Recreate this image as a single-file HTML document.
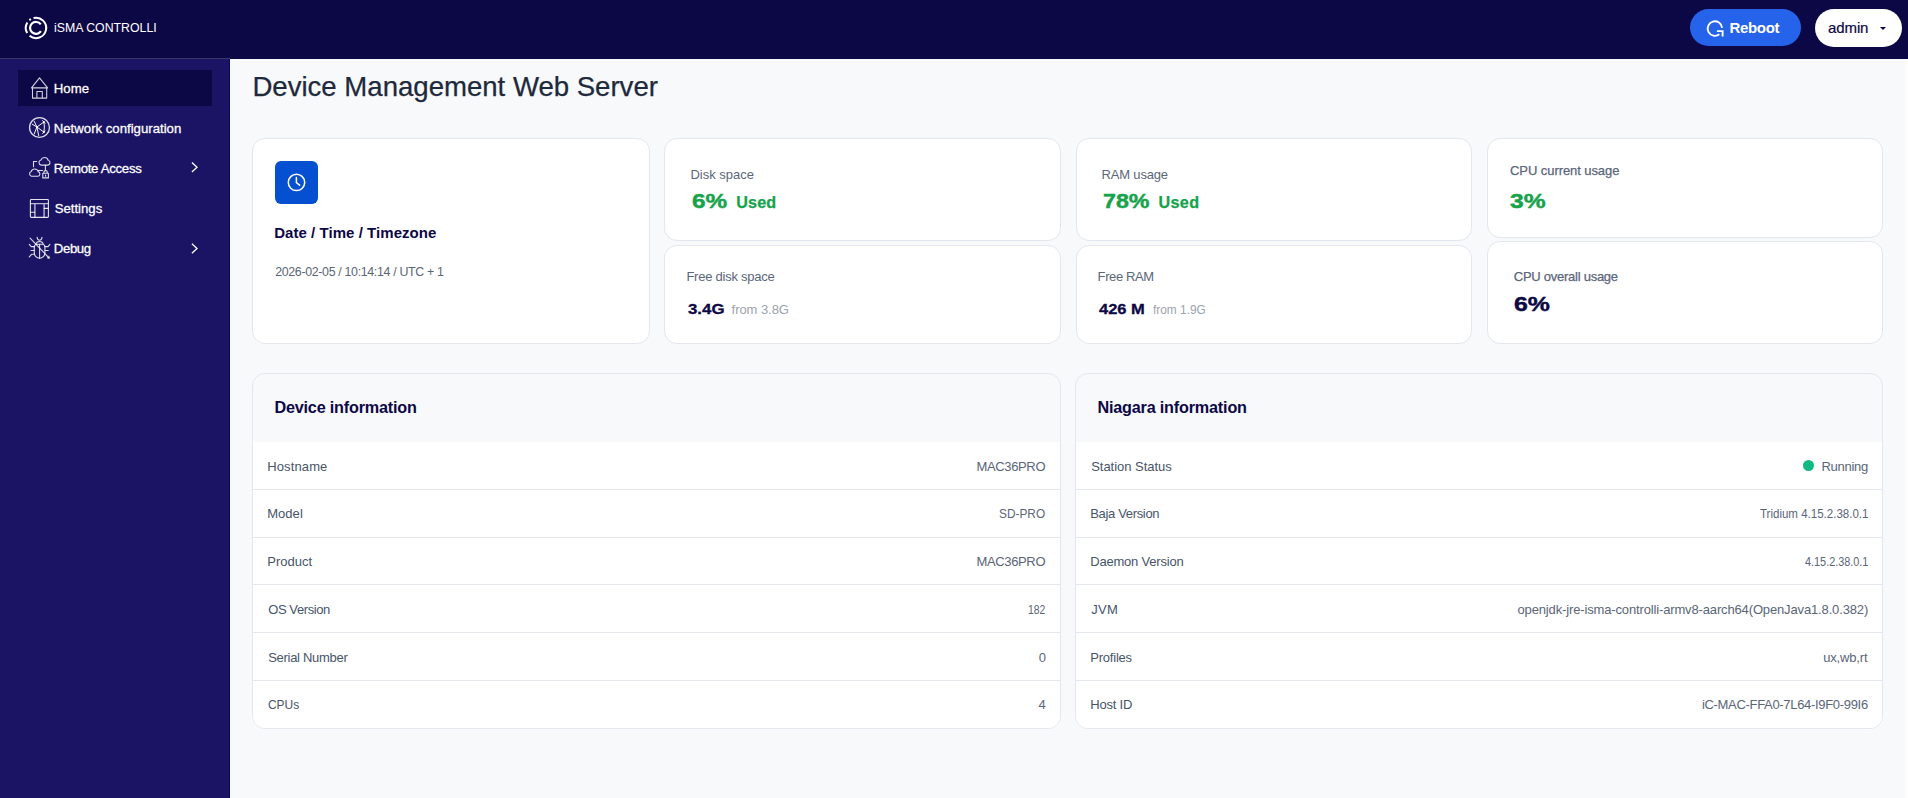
<!DOCTYPE html>
<html lang="en">
<head>
<meta charset="utf-8">
<title>Device Management Web Server</title>
<style>
*{box-sizing:border-box;margin:0;padding:0}
html,body{width:1908px;height:798px;overflow:hidden;background:#f8f9fb;font-family:"Liberation Sans",sans-serif}
.abs,.t,.card,.panel{position:absolute}
.t{white-space:nowrap;transform-origin:0 50%;display:block}
.hdr{left:0;top:0;width:1908px;height:59px;background:#0c0745}
.hline{left:0;top:58px;width:230px;height:1px;background:#3b3768}
.side{left:0;top:59px;width:230px;height:739px;background:#1b1464;border-right:1px solid #0e0858}
.active{left:18px;top:70px;width:194px;height:36px;background:#0c0745}
.card{background:#fff;border:1px solid #e5e7ee;border-radius:13px}
.panel{background:#f8f9fb;border:1px solid #e5e7ee;border-radius:13px;overflow:hidden}
.panel .body{position:absolute;left:0;right:0;top:68px;bottom:0;background:#fff}
.panel .ln{position:absolute;left:0;right:0;height:1px;background:#e5e7ee}
.btn{border-radius:19px}
svg{position:absolute;overflow:visible}
</style>
</head>
<body>
<!-- backgrounds -->
<div class="abs hdr"></div>
<div class="abs side"></div>
<div class="abs hline"></div>
<div class="abs" style="left:1905px;top:59px;width:3px;height:739px;background:#fcfcfd"></div>

<header>
<div class="abs btn" style="left:1690px;top:9px;width:111px;height:37px;background:#2563eb"></div>
<div class="abs btn" style="left:1815px;top:9px;width:87px;height:38px;background:#fff"></div>
<div class="abs" style="left:1879.5px;top:26.5px;width:0;height:0;border-left:3.6px solid transparent;border-right:3.6px solid transparent;border-top:3.8px solid #0c0745"></div>
<span class="t" style="top:19.00px;font-size:13.2px;line-height:17px;color:#ffffff;left:53.70px;transform:scaleX(0.9347);">iSMA CONTROLLI</span>
<span class="t" style="top:18.00px;font-size:15px;line-height:20px;color:#ffffff;font-weight:700;left:1729.40px;letter-spacing:-0.313px;">Reboot</span>
<span class="t" style="top:18.00px;font-size:15px;line-height:20px;color:#0c0745;-webkit-text-stroke:0.2px #0c0745;left:1828.12px;letter-spacing:-0.138px;">admin</span>
</header>

<nav>
<div class="abs active"></div>
<span class="t" style="top:80.00px;font-size:13.2px;line-height:17px;color:#ffffff;-webkit-text-stroke:0.28px #ffffff;left:53.77px;letter-spacing:0.074px;">Home</span>
<span class="t" style="top:120.00px;font-size:13.2px;line-height:17px;color:#ffffff;-webkit-text-stroke:0.28px #ffffff;left:53.77px;letter-spacing:-0.002px;">Network configuration</span>
<span class="t" style="top:160.00px;font-size:13.2px;line-height:17px;color:#ffffff;-webkit-text-stroke:0.28px #ffffff;left:53.77px;letter-spacing:-0.299px;">Remote Access</span>
<span class="t" style="top:200.00px;font-size:13.2px;line-height:17px;color:#ffffff;-webkit-text-stroke:0.28px #ffffff;left:54.77px;letter-spacing:-0.027px;">Settings</span>
<span class="t" style="top:240.00px;font-size:13.2px;line-height:17px;color:#ffffff;-webkit-text-stroke:0.28px #ffffff;left:53.77px;letter-spacing:-0.366px;">Debug</span>
</nav>

<main>
<h1 class="t" style="top:69.00px;font-size:27.6px;line-height:36px;color:#1e293b;font-weight:400;-webkit-text-stroke:0.25px #1e293b;left:252.45px;letter-spacing:-0.016px;">Device Management Web Server</h1>

<section>
<div class="card" style="left:252px;top:138px;width:398px;height:206px"></div>
<div class="card" style="left:664px;top:138px;width:397px;height:103px"></div>
<div class="card" style="left:664px;top:245px;width:397px;height:99px"></div>
<div class="card" style="left:1076px;top:138px;width:396px;height:103px"></div>
<div class="card" style="left:1076px;top:245px;width:396px;height:99px"></div>
<div class="card" style="left:1487px;top:138px;width:396px;height:100px"></div>
<div class="card" style="left:1487px;top:241px;width:396px;height:103px"></div>
<div class="abs" style="left:275px;top:161px;width:43px;height:43px;border-radius:6px;background:#0550d0"></div>
<span class="t" style="top:223.00px;font-size:15px;line-height:20px;color:#0c0745;font-weight:700;left:274.20px;letter-spacing:0.047px;">Date / Time / Timezone</span>
<span class="t" style="top:264.00px;font-size:12.4px;line-height:16px;color:#5a6577;left:275.20px;letter-spacing:-0.335px;">2026-02-05 / 10:14:14 / UTC + 1</span>
<span class="t" style="top:166.00px;font-size:13px;line-height:17px;color:#5b667a;left:690.40px;letter-spacing:0.006px;">Disk space</span>
<span class="t" style="top:188.00px;font-size:20.3px;line-height:26px;color:#16a34a;font-weight:700;-webkit-text-stroke:0.45px #16a34a;left:691.67px;transform:scaleX(1.2008);">6%</span>
<span class="t" style="top:192.00px;font-size:16.2px;line-height:21px;color:#16a34a;font-weight:700;-webkit-text-stroke:0.25px #16a34a;left:736.25px;letter-spacing:0.135px;">Used</span>
<span class="t" style="top:268.00px;font-size:13px;line-height:17px;color:#5b667a;left:686.40px;letter-spacing:-0.238px;">Free disk space</span>
<span class="t" style="top:299.00px;font-size:15.3px;line-height:20px;color:#0c0745;font-weight:700;-webkit-text-stroke:0.3px #0c0745;left:687.58px;transform:scaleX(1.1015);">3.4G</span>
<span class="t" style="top:301.00px;font-size:13px;line-height:17px;color:#9ca3af;left:731.60px;letter-spacing:-0.060px;">from 3.8G</span>
<span class="t" style="top:166.00px;font-size:13px;line-height:17px;color:#5b667a;left:1101.60px;letter-spacing:-0.186px;">RAM usage</span>
<span class="t" style="top:188.00px;font-size:20.3px;line-height:26px;color:#16a34a;font-weight:700;-webkit-text-stroke:0.45px #16a34a;left:1102.87px;transform:scaleX(1.1455);">78%</span>
<span class="t" style="top:192.00px;font-size:16.2px;line-height:21px;color:#16a34a;font-weight:700;-webkit-text-stroke:0.25px #16a34a;left:1158.55px;letter-spacing:0.301px;">Used</span>
<span class="t" style="top:268.00px;font-size:13px;line-height:17px;color:#5b667a;left:1097.60px;letter-spacing:-0.386px;">Free RAM</span>
<span class="t" style="top:299.00px;font-size:15.3px;line-height:20px;color:#0c0745;font-weight:700;-webkit-text-stroke:0.3px #0c0745;left:1098.78px;transform:scaleX(1.0782);">426 M</span>
<span class="t" style="top:301.00px;font-size:13px;line-height:17px;color:#9ca3af;left:1153.10px;transform:scaleX(0.9136);">from 1.9G</span>
<span class="t" style="top:162.00px;font-size:13px;line-height:17px;color:#5b667a;-webkit-text-stroke:0.25px #5b667a;left:1510.05px;letter-spacing:-0.076px;">CPU current usage</span>
<span class="t" style="top:188.00px;font-size:20.3px;line-height:26px;color:#16a34a;font-weight:700;-webkit-text-stroke:0.45px #16a34a;left:1510.17px;transform:scaleX(1.2145);">3%</span>
<span class="t" style="top:268.00px;font-size:13px;line-height:17px;color:#5b667a;-webkit-text-stroke:0.25px #5b667a;left:1513.75px;letter-spacing:-0.254px;">CPU overall usage</span>
<span class="t" style="top:291.00px;font-size:20.3px;line-height:26px;color:#0c0745;font-weight:700;-webkit-text-stroke:0.45px #0c0745;left:1513.87px;transform:scaleX(1.2247);">6%</span>
</section>

<section>
<div class="panel" style="left:252px;top:373px;width:809px;height:356px">
  <div class="body"></div>
  <div class="ln" style="top:115px"></div><div class="ln" style="top:163px"></div><div class="ln" style="top:210px"></div><div class="ln" style="top:258px"></div><div class="ln" style="top:306px"></div>
</div>
<h2 class="t" style="top:397.00px;font-size:16.2px;line-height:21px;color:#0c0745;font-weight:700;left:274.40px;letter-spacing:-0.190px;">Device information</h2>
<span class="t" style="top:458.00px;font-size:13px;line-height:17px;color:#475569;left:267.20px;letter-spacing:0.126px;">Hostname</span>
<span class="t" style="top:458.00px;font-size:13px;line-height:17px;color:#5a6577;left:976.50px;letter-spacing:-0.358px;">MAC36PRO</span>
<span class="t" style="top:505.00px;font-size:13px;line-height:17px;color:#475569;left:267.20px;letter-spacing:0.045px;">Model</span>
<span class="t" style="top:505.00px;font-size:13px;line-height:17px;color:#5a6577;left:999.40px;transform:scaleX(0.9118);">SD-PRO</span>
<span class="t" style="top:553.00px;font-size:13px;line-height:17px;color:#475569;left:267.20px;letter-spacing:0.035px;">Product</span>
<span class="t" style="top:553.00px;font-size:13px;line-height:17px;color:#5a6577;left:976.50px;letter-spacing:-0.358px;">MAC36PRO</span>
<span class="t" style="top:601.00px;font-size:13px;line-height:17px;color:#475569;left:268.20px;letter-spacing:-0.403px;">OS Version</span>
<span class="t" style="top:601.00px;font-size:13px;line-height:17px;color:#5a6577;left:1028.30px;transform:scaleX(0.7968);">182</span>
<span class="t" style="top:649.00px;font-size:13px;line-height:17px;color:#475569;left:268.20px;letter-spacing:-0.288px;">Serial Number</span>
<span class="t" style="top:649.00px;font-size:13px;line-height:17px;color:#5a6577;left:1038.80px;letter-spacing:-0.400px;">0</span>
<span class="t" style="top:696.00px;font-size:13px;line-height:17px;color:#475569;left:268.20px;transform:scaleX(0.9173);">CPUs</span>
<span class="t" style="top:696.00px;font-size:13px;line-height:17px;color:#5a6577;left:1038.50px;letter-spacing:-0.100px;">4</span>
</section>

<section>
<div class="panel" style="left:1075px;top:373px;width:808px;height:356px">
  <div class="body"></div>
  <div class="ln" style="top:115px"></div><div class="ln" style="top:163px"></div><div class="ln" style="top:210px"></div><div class="ln" style="top:258px"></div><div class="ln" style="top:306px"></div>
</div>
<div class="abs" style="left:1803px;top:460px;width:11px;height:11px;border-radius:50%;background:#10b981"></div>
<h2 class="t" style="top:397.00px;font-size:16.2px;line-height:21px;color:#0c0745;font-weight:700;left:1097.40px;letter-spacing:-0.184px;">Niagara information</h2>
<span class="t" style="top:458.00px;font-size:13px;line-height:17px;color:#475569;left:1091.20px;letter-spacing:-0.026px;">Station Status</span>
<span class="t" style="top:458.00px;font-size:13px;line-height:17px;color:#5a6577;left:1821.50px;letter-spacing:-0.299px;">Running</span>
<span class="t" style="top:505.00px;font-size:13px;line-height:17px;color:#475569;left:1090.20px;letter-spacing:-0.333px;">Baja Version</span>
<span class="t" style="top:505.00px;font-size:13px;line-height:17px;color:#5a6577;left:1759.70px;transform:scaleX(0.8859);">Tridium 4.15.2.38.0.1</span>
<span class="t" style="top:553.00px;font-size:13px;line-height:17px;color:#475569;left:1090.20px;letter-spacing:-0.198px;">Daemon Version</span>
<span class="t" style="top:553.00px;font-size:13px;line-height:17px;color:#5a6577;left:1804.70px;transform:scaleX(0.8352);">4.15.2.38.0.1</span>
<span class="t" style="top:601.00px;font-size:13px;line-height:17px;color:#475569;left:1091.20px;letter-spacing:0.315px;">JVM</span>
<span class="t" style="top:601.00px;font-size:13px;line-height:17px;color:#5a6577;left:1517.50px;letter-spacing:-0.144px;">openjdk-jre-isma-controlli-armv8-aarch64(OpenJava1.8.0.382)</span>
<span class="t" style="top:649.00px;font-size:13px;line-height:17px;color:#475569;left:1090.20px;letter-spacing:-0.207px;">Profiles</span>
<span class="t" style="top:649.00px;font-size:13px;line-height:17px;color:#5a6577;left:1823.20px;letter-spacing:-0.172px;">ux,wb,rt</span>
<span class="t" style="top:696.00px;font-size:13px;line-height:17px;color:#475569;left:1090.20px;letter-spacing:-0.192px;">Host ID</span>
<span class="t" style="top:696.00px;font-size:13px;line-height:17px;color:#5a6577;left:1701.90px;letter-spacing:-0.315px;">iC-MAC-FFA0-7L64-I9F0-99I6</span>
</section>
</main>

<!-- icons -->
<svg width="1908" height="798" viewBox="0 0 1908 798" style="left:0;top:0" fill="none" stroke-linecap="round" stroke-linejoin="round">
<g stroke="#fff" stroke-width="2" stroke-linecap="butt">
<path d="M33.53 18.00A10.2 10.2 0 1 1 29.58 35.83"/>
<path d="M27.17 33.00A10.2 10.2 0 0 1 27.35 22.49"/>
<path d="M40.93 31.23A5.95 5.95 0 1 1 40.75 24.32" stroke-width="2.2"/>
</g>
<circle cx="30.09" cy="19.59" r="1.15" fill="#fff"/>
<g stroke="#fff" stroke-opacity=".82" stroke-width="1.1">
<path d="M31.5 87.8L39.5 77.9L47.6 87.8M31.6 87.9H47.5M32.5 88.1V98.1H46.7V88.1M36.9 97.9V91.5H42.3V97.9"/>
</g>
<g stroke="#fff" stroke-opacity=".85" stroke-width="1.1">
<circle cx="39.5" cy="127.5" r="9.95" stroke-width="1.3"/>
<path stroke-width="1" stroke-opacity=".95" d="M36.9 127L43.9 122M36.9 127L43.9 132.1M43.9 122Q45 127 43.9 132.1M36.9 127L34.2 121.3M36.9 127L32.2 124.2M36.9 127L34.2 134M36.9 127L38.7 135.6M42.6 120.6L45 123.2M42.6 133.6L45 131"/>
<circle cx="36.9" cy="127" r=".9" fill="#fff" stroke="none"/><circle cx="43.9" cy="122" r=".9" fill="#fff" stroke="none"/><circle cx="43.9" cy="132.1" r=".9" fill="#fff" stroke="none"/>
</g>
<g stroke="#fff" stroke-opacity=".85" stroke-width="1.1">
<path d="M41.3 165.1H47.6A2.5 2.5 0 0 0 48.2 160.2A3.9 3.9 0 0 0 40.9 160A2.6 2.6 0 0 0 41.3 165.1Z"/>
<path d="M31.6 176.3H37.6A2.4 2.4 0 0 0 38.2 171.6A3.7 3.7 0 0 0 31.2 171.5A2.5 2.5 0 0 0 31.6 176.3Z"/>
<path d="M33.5 166.7V161.5H36.7M45.4 165.4V170M38.4 170.5H42.6"/>
<path d="M42.8 173.3H48.4V177.9H42.8ZM43.9 173.2V172.3A1.7 1.7 0 0 1 47.3 172.3V173.2M45.6 175V176.3"/>
</g>
<g stroke="#fff" stroke-opacity=".88" stroke-width="1.1">
<rect x="30.4" y="199.5" width="18" height="17.9" rx=".8"/>
<path stroke-opacity=".7" stroke-width="1.4" d="M30.6 203.6H48.2M34.9 203.8V217.2M44.1 203.8V217.2"/><path d="M44.3 208.4H48.2M30.6 212.3H34.7"/>
</g>
<g stroke="#fff" stroke-opacity=".85" stroke-width="1.1">
<path d="M30.1 238.1L49.1 258"/>
<path d="M37.1 237.3Q37.3 240.2 39.6 240.2Q41.8 240.2 42 237.3"/>
<path d="M36.1 243.5A3.6 2.7 0 0 1 43.1 243.5"/>
<path d="M34.3 247.3Q34.3 244.3 37.2 244.3H42Q44.9 244.3 44.9 247.3V252.8A5.3 5.5 0 0 1 34.3 252.8Z"/>
<path stroke-width=".9" d="M47.4 257.9L49.3 258.2L48.9 256.2"/>
<path d="M39.6 244.4V258.2"/>
<path d="M34.2 246.6H31.2L29.3 244.3M34.2 250.5H31M34.4 254.3H31.6L29.3 256.9M45 246.6H48L49.9 244.3M45 250.5H48.2"/>
</g>
<g stroke="#fff" stroke-width="1.3" stroke-linecap="butt" stroke-linejoin="miter"><path d="M191.9 162.6L197 167.3L191.9 172"/><path d="M191.9 243.8L197 248.5L191.9 253.2"/></g>
<g stroke="#fff" stroke-width="1.9" stroke-linecap="butt" stroke-linejoin="miter"><path d="M1722.11 27.84A7.25 7.25 0 1 0 1719.36 34.31"/><path d="M1716.9 31.1H1722.6V36.5"/></g>
<g stroke="#fff" stroke-width="1.5"><circle cx="296.5" cy="182.4" r="8.2"/><path d="M296.4 177.6V182.7L299.6 185.2"/></g>
</svg>
</body>
</html>
